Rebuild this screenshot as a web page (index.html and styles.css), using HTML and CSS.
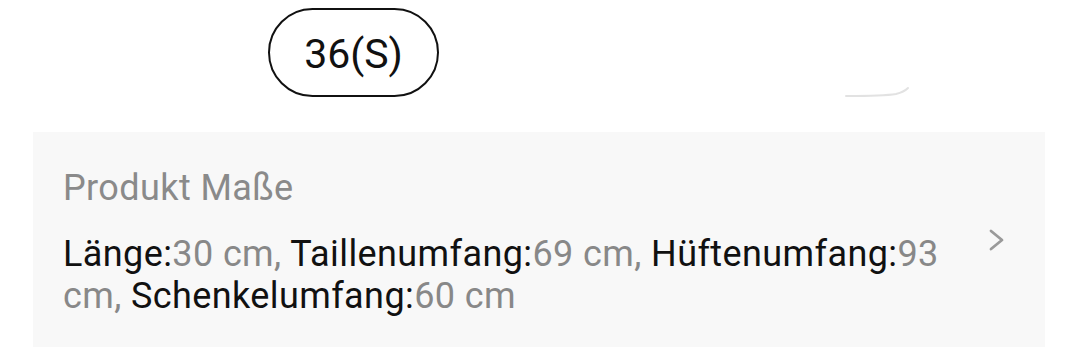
FILE: index.html
```html
<!DOCTYPE html>
<html lang="de">
<head>
    <meta charset="UTF-8">
    <meta name="viewport" content="width=device-width, initial-scale=1.0">
    <title>Produkt Maße</title>
    <link rel="stylesheet" href="styles.css">
</head>
<body>

<div class="sizes">
    <span class="size-chip size-chip--active">36(S)</span>
    <svg class="chip-edge" width="70" height="12" viewBox="0 0 70 12">
        <path d="M2 10 Q40 10 52 8 Q60 6 64 2" fill="none" stroke="#e2e2e2" stroke-width="2" stroke-linecap="round"/>
    </svg>
</div>

<div class="measures">
    <div class="measures-body">
        <div class="measures-title">Produkt Maße</div>
        <div class="measures-text">
            <span class="key">Länge:</span><span class="val">30 cm, </span><span class="key">Taillenumfang:</span><span class="val">69 cm, </span><span class="key">Hüftenumfang:</span><span class="val">93 cm, </span><span class="key">Schenkelumfang:</span><span class="val">60 cm</span>
        </div>
    </div>
    <svg class="chevron" width="18" height="24" viewBox="0 0 18 24">
        <path d="M3 3 L14 12 L3 21" fill="none" stroke="#9a9a9a" stroke-width="2.8" stroke-linecap="round" stroke-linejoin="round"/>
    </svg>
</div>

</body>
</html>
```

FILE: styles.css
```css
body {
    font-family: Roboto, "Liberation Sans", sans-serif;
    background-color: #ffffff;
    margin: 0;
    padding: 0;
    width: 1080px;
    height: 359px;
    overflow: hidden;
}
.sizes {
    display: flex;
    align-items: flex-start;
    height: 132px;
    padding-left: 268px;
    padding-top: 8px;
    box-sizing: border-box;
}
.size-chip {
    display: inline-flex;
    align-items: center;
    justify-content: center;
    box-sizing: border-box;
    height: 89px;
    border-radius: 45px;
    font-size: 41px;
    color: #111;
}
.size-chip--active {
    width: 171px;
    border: 2px solid #111;
    padding-top: 2px;
}
.chip-edge {
    margin-left: 405px;
    margin-top: 78px;
}
.measures {
    display: flex;
    align-items: flex-start;
    margin-left: 33px;
    width: 1012px;
    height: 215px;
    background-color: #f8f8f8;
    box-sizing: border-box;
    padding: 34px 39px 0 30px;
}
.measures-body {
    flex: 1;
}
.measures-title {
    font-size: 36px;
    color: #8a8a8a;
    line-height: 44px;
    margin-bottom: 23px;
    letter-spacing: 0.4px;
}
.measures-text {
    font-size: 36px;
    line-height: 42px;
    width: 910px;
    letter-spacing: 0.4px;
}
.key {
    color: #111;
}
.val {
    color: #888;
}
.chevron {
    margin-top: 62px;
}
```
